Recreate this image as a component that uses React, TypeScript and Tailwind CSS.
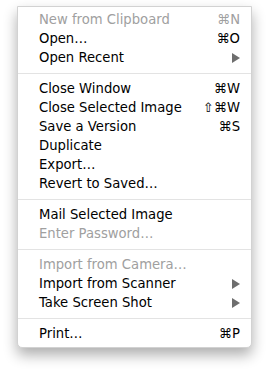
import { Fragment } from "react";

type Item = {
  label: string;
  shortcut?: string;
  disabled?: boolean;
  submenu?: boolean;
};

const groups: Item[][] = [
  [
    { label: "New from Clipboard", shortcut: "⌘N", disabled: true },
    { label: "Open…", shortcut: "⌘O" },
    { label: "Open Recent", submenu: true },
  ],
  [
    { label: "Close Window", shortcut: "⌘W" },
    { label: "Close Selected Image", shortcut: "⇧⌘W" },
    { label: "Save a Version", shortcut: "⌘S" },
    { label: "Duplicate" },
    { label: "Export…" },
    { label: "Revert to Saved…" },
  ],
  [
    { label: "Mail Selected Image" },
    { label: "Enter Password…", disabled: true },
  ],
  [
    { label: "Import from Camera…", disabled: true },
    { label: "Import from Scanner", submenu: true },
    { label: "Take Screen Shot", submenu: true },
  ],
  [{ label: "Print…", shortcut: "⌘P" }],
];

const MenuRow = ({ item }: { item: Item }) => (
  <div
    className={`flex h-[19px] items-center justify-between pl-[21px] pr-[11px] ${
      item.disabled ? "text-[#a0a0a0]" : "text-black"
    }`}
  >
    <span>{item.label}</span>
    {item.shortcut && <span>{item.shortcut}</span>}
    {item.submenu && (
      <svg width="8" height="10" viewBox="0 0 8 10">
        <path d="M0 0 L8 5 L0 10 Z" fill="#6e6e6e" />
      </svg>
    )}
  </div>
);

const App = () => {
  return (
    <div className="min-h-screen bg-white pt-[6px] pl-[17px]">
      <div
        className="w-[235px] rounded-b-[5px] border border-[#d2d2d2] bg-white pt-[3px] pb-[4px]
        text-[13.2px] leading-none shadow-[0_7px_14px_rgba(0,0,0,0.32)]"
        style={{ fontFamily: '"DejaVu Sans", sans-serif' }}
      >
        {groups.map((group, i) => (
          <Fragment key={i}>
            {i > 0 && (
              <div className="flex h-[12px] items-center">
                <div className="h-px w-full bg-[#e3e3e3]" />
              </div>
            )}
            {group.map((item) => (
              <MenuRow key={item.label} item={item} />
            ))}
          </Fragment>
        ))}
      </div>
    </div>
  );
};

export default App;
